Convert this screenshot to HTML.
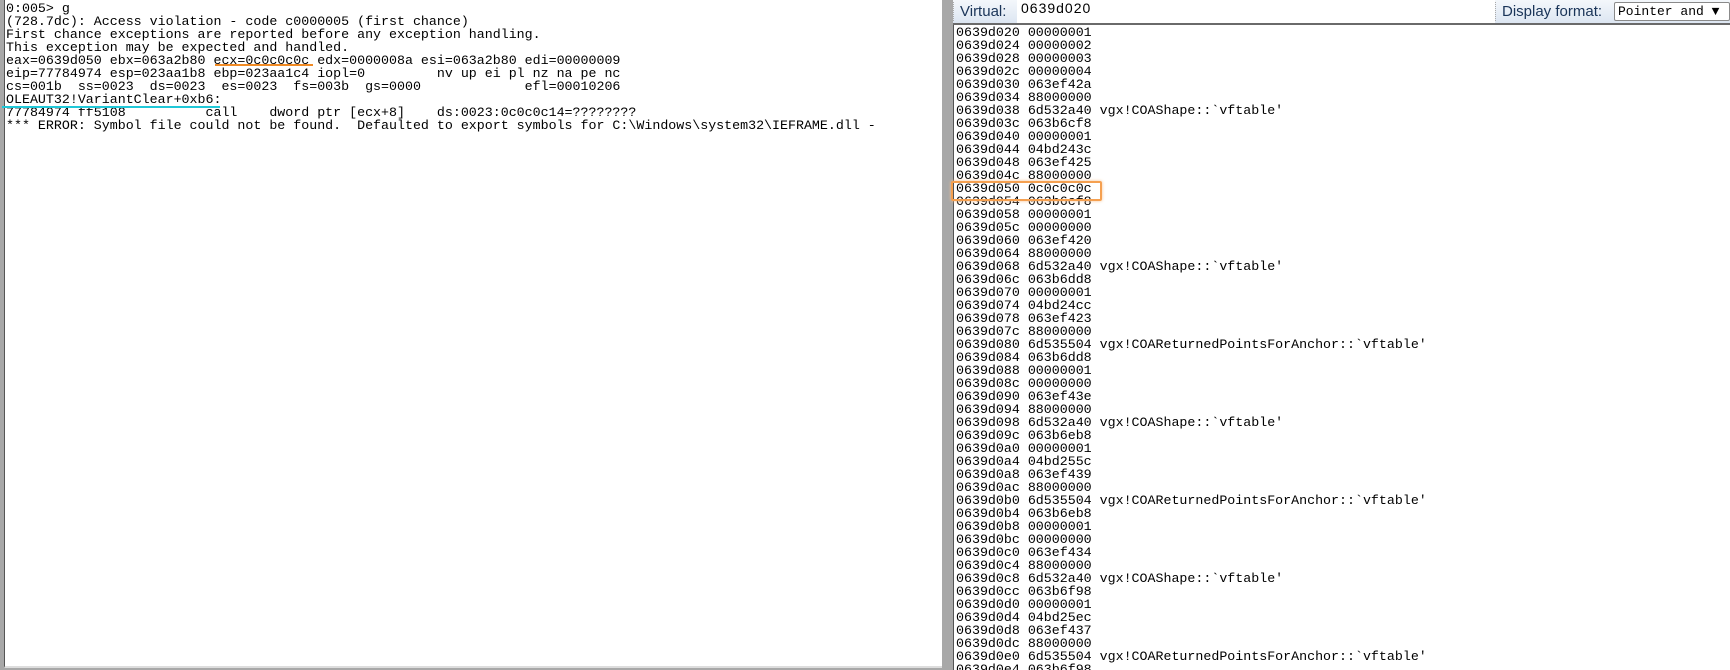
<!DOCTYPE html>
<html><head><style>
body{margin:0;width:1730px;height:670px;overflow:hidden;background:#a8a8a8;position:relative;font-family:"Liberation Mono",monospace}
#left{position:absolute;left:4px;top:0;width:937px;height:666px;background:#fff;border-left:1px solid #555;border-bottom:2px solid #ddd;overflow:hidden}
#left pre{margin:0;padding:2px 0 0 1px;font-size:13.3px;line-height:13px;color:#000;font-family:"Liberation Mono",monospace;white-space:pre}
#right{position:absolute;left:953px;top:0;width:777px;height:670px;background:#fff}
#tb{position:absolute;left:0;top:0;width:777px;height:23px;background:linear-gradient(#f4f7fb,#dde6f2);border-bottom:2px solid #6a6a6a}
.lbl{position:absolute;top:2px;font-family:"Liberation Sans",sans-serif;font-size:15px;line-height:19px;color:#1a3458;border-left:1px dotted #aaa;padding-left:6px;white-space:nowrap}
#inp{position:absolute;left:64px;top:0;width:474px;height:23px;background:#fff;font-family:"Liberation Sans",sans-serif;font-size:14px;letter-spacing:1px;line-height:17px;padding-left:4px}
#combo{position:absolute;left:661px;top:2px;width:116px;height:19px;background:#fff;border:1px solid #8a8a8a;border-radius:2px;font-size:13px;line-height:17px;padding-left:3px;box-sizing:border-box;white-space:nowrap;overflow:hidden}
#list{position:absolute;left:0;top:25px;width:777px;height:645px;border-left:1px solid #555;overflow:hidden}
#list pre{margin:0;padding:1px 0 0 2px;font-size:13.3px;line-height:13px;font-family:"Liberation Mono",monospace}
.u1{position:absolute;left:215px;top:64px;width:98px;height:2px;background:#f08a24}
.u2{position:absolute;left:2px;top:106px;width:218px;height:2px;background:#20c8d8}
.box{position:absolute;left:951px;top:181px;width:147px;height:16px;border:2px solid #f5a050;border-radius:2px;box-shadow:0 0 3px #f5c090}
</style></head><body>
<div id="left"><pre>0:005&gt; g
(728.7dc): Access violation - code c0000005 (first chance)
First chance exceptions are reported before any exception handling.
This exception may be expected and handled.
eax=0639d050 ebx=063a2b80 ecx=0c0c0c0c edx=0000008a esi=063a2b80 edi=00000009
eip=77784974 esp=023aa1b8 ebp=023aa1c4 iopl=0         nv up ei pl nz na pe nc
cs=001b  ss=0023  ds=0023  es=0023  fs=003b  gs=0000             efl=00010206
OLEAUT32!VariantClear+0xb6:
77784974 ff5108          call    dword ptr [ecx+8]    ds:0023:0c0c0c14=????????
*** ERROR: Symbol file could not be found.  Defaulted to export symbols for C:\Windows\system32\IEFRAME.dll -</pre>
</div>
<div class="u1"></div><div class="u2"></div>
<div id="right">
<div id="tb"><span class="lbl" style="left:0">Virtual:</span><div id="inp">0639d020</div>
<span class="lbl" style="left:542px">Display format:</span><div id="combo">Pointer and ▼</div></div>
<div id="list"><pre>0639d020 00000001
0639d024 00000002
0639d028 00000003
0639d02c 00000004
0639d030 063ef42a
0639d034 88000000
0639d038 6d532a40 vgx!COAShape::`vftable'
0639d03c 063b6cf8
0639d040 00000001
0639d044 04bd243c
0639d048 063ef425
0639d04c 88000000
0639d050 0c0c0c0c
0639d054 063b6cf8
0639d058 00000001
0639d05c 00000000
0639d060 063ef420
0639d064 88000000
0639d068 6d532a40 vgx!COAShape::`vftable'
0639d06c 063b6dd8
0639d070 00000001
0639d074 04bd24cc
0639d078 063ef423
0639d07c 88000000
0639d080 6d535504 vgx!COAReturnedPointsForAnchor::`vftable'
0639d084 063b6dd8
0639d088 00000001
0639d08c 00000000
0639d090 063ef43e
0639d094 88000000
0639d098 6d532a40 vgx!COAShape::`vftable'
0639d09c 063b6eb8
0639d0a0 00000001
0639d0a4 04bd255c
0639d0a8 063ef439
0639d0ac 88000000
0639d0b0 6d535504 vgx!COAReturnedPointsForAnchor::`vftable'
0639d0b4 063b6eb8
0639d0b8 00000001
0639d0bc 00000000
0639d0c0 063ef434
0639d0c4 88000000
0639d0c8 6d532a40 vgx!COAShape::`vftable'
0639d0cc 063b6f98
0639d0d0 00000001
0639d0d4 04bd25ec
0639d0d8 063ef437
0639d0dc 88000000
0639d0e0 6d535504 vgx!COAReturnedPointsForAnchor::`vftable'
0639d0e4 063b6f98</pre></div>
</div>
<div class="box"></div>
</body></html>
